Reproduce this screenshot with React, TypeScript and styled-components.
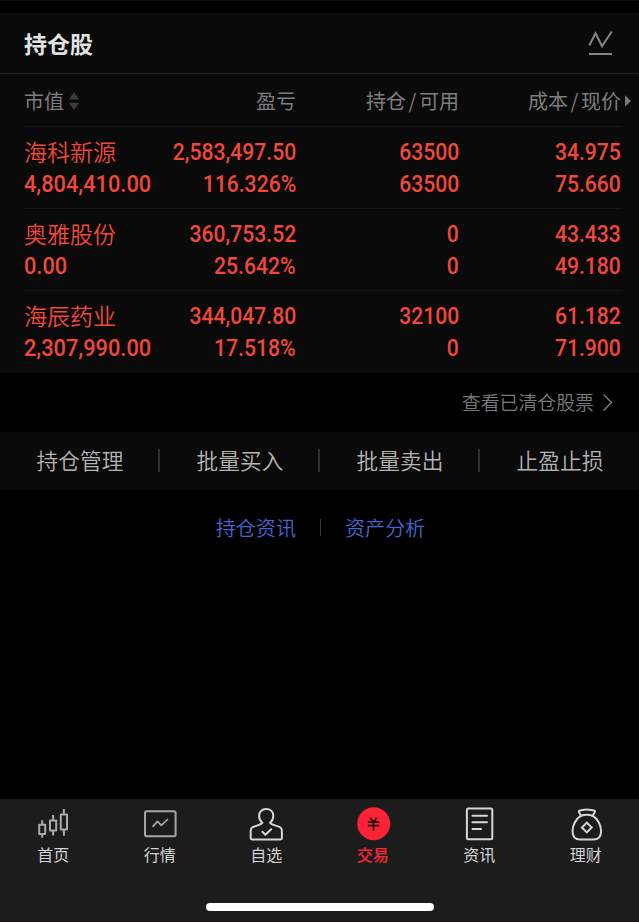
import React from "react";
import styled, { createGlobalStyle } from "styled-components";

const GlobalStyle = createGlobalStyle`
  * { box-sizing: border-box; }
  body {
    margin: 0;
    background: #000;
    font-family: "Noto Sans CJK SC", sans-serif;
    -webkit-font-smoothing: antialiased;
  }
`;

const Screen = styled.div`
  width: 639px;
  height: 922px;
  display: flex;
  flex-direction: column;
  background: #000;
  border-top: 1px solid #0b0b0b;
  overflow: hidden;
`;

const Panel = styled.section`
  margin-top: 12px;
  height: 360px;
  background: #0a0a0a;
`;

const PanelHeader = styled.header`
  height: 61px;
  padding: 0 26px 1px 24px;
  display: flex;
  align-items: center;
  justify-content: space-between;
  border-bottom: 1px solid #232323;
`;

const Title = styled.h1`
  margin: 0;
  font-size: 23px;
  font-weight: 700;
  line-height: 34px;
  color: #e2e2e2;
`;

const Columns = styled.div`
  display: grid;
  grid-template-columns: 133px 139px 163px 162px;
  margin-left: 24px;
  width: 598px;
`;

const HeadRow = styled(Columns)`
  height: 52px;
  align-items: center;
  font-size: 20px;
  line-height: 30px;
  color: #7e7e7e;
  padding-top: 1px;
`;

const HeadCell = styled.div<{ $start?: boolean }>`
  display: flex;
  align-items: center;
  justify-content: ${(p) => (p.$start ? "flex-start" : "flex-end")};
  white-space: nowrap;
`;

const Slash = styled.span`
  width: 13px;
  text-align: center;
`;

const SortIcon = styled.svg`
  margin-left: 4px;
`;

const MoreArrow = styled.svg`
  margin: 0 -10px 0 4px;
`;

const Row = styled(Columns)`
  height: 82px;
  padding-top: 9px;
  grid-auto-rows: 32px;
  border-top: 1px solid #151515;
  color: #f0483a;
`;

const StockName = styled.div`
  font-size: 23px;
  line-height: 31px;
  font-weight: 350;
`;

const Figure = styled.div<{ $start?: boolean }>`
  font-family: Roboto, sans-serif;
  font-size: 24px;
  font-weight: 500;
  line-height: 33px;
  white-space: nowrap;
  justify-self: ${(p) => (p.$start ? "start" : "end")};
  transform: scaleX(${(p) => (p.$start ? 0.907 : 0.88)});
  transform-origin: ${(p) => (p.$start ? "left" : "right")};
`;

const ClearedLink = styled.div`
  height: 59px;
  padding: 0 26px 2px 0;
  display: flex;
  align-items: center;
  justify-content: flex-end;
  gap: 8px;
  font-size: 18.9px;
  font-weight: 350;
  color: #7a7a7a;
`;

const ActionBar = styled.nav`
  height: 58px;
  display: grid;
  grid-template-columns: repeat(4, 160px);
  background: #0a0a0a;
`;

const Action = styled.div`
  display: flex;
  align-items: center;
  justify-content: center;
  position: relative;
  padding-bottom: 3px;
  font-size: 21.7px;
  font-weight: 350;
  color: #b4b4b4;

  &:not(:last-child)::after {
    content: "";
    position: absolute;
    right: 0;
    top: 17px;
    width: 2px;
    height: 23px;
    background: #303030;
  }
`;

const Links = styled.div`
  height: 75px;
  display: flex;
  align-items: center;
  justify-content: center;
  gap: 24px;
  padding-left: 2px;
  font-size: 20.1px;
  font-weight: 350;
  color: #4565cf;
`;

const LinkDivider = styled.span`
  width: 1px;
  height: 17px;
  background: #353535;
`;

const TabBar = styled.footer`
  margin-top: auto;
  height: 123px;
  padding-top: 7px;
  background: #1c1c1c;
  border-bottom: 1px solid #120a0c;
`;

const Tabs = styled.div`
  display: grid;
  grid-template-columns: repeat(6, 1fr);
  height: 97px;
`;

const Tab = styled.div<{ $active?: boolean }>`
  display: flex;
  flex-direction: column;
  align-items: center;
  font-size: 16px;
  line-height: 24px;
  font-weight: ${(p) => (p.$active ? 500 : 400)};
  color: ${(p) => (p.$active ? "#fd2336" : "#d2d2d2")};
`;

const TabIcon = styled.svg`
  display: block;
  width: 36px;
  height: 36px;
  fill: none;
  stroke-width: 2;
  stroke-linecap: round;
  stroke-linejoin: round;
`;

const HomeIndicator = styled.div`
  width: 228px;
  height: 8px;
  margin: 0 auto;
  border-radius: 4px;
  background: #fff;
`;

const holdings = [
  { name: "海科新源", value: "4,804,410.00", profit: "2,583,497.50", rate: "116.326%", held: "63500", usable: "63500", cost: "34.975", price: "75.660" },
  { name: "奥雅股份", value: "0.00", profit: "360,753.52", rate: "25.642%", held: "0", usable: "0", cost: "43.433", price: "49.180" },
  { name: "海辰药业", value: "2,307,990.00", profit: "344,047.80", rate: "17.518%", held: "32100", usable: "0", cost: "61.182", price: "71.900" },
];

const tabs = [
  {
    label: "首页",
    icon: (
      <g stroke="#ababab" strokeLinecap="butt" strokeLinejoin="round">
        <path d="M4.2 18.7h6v9.3h-6zM7.2 14.3v4.4M7.2 28v3.8" />
        <path d="M15 14.4h6.2v10H15zM18.1 9v5.4M18.1 24.4v5" />
        <path d="M25.8 8.6h6.2v14.8h-6.2zM28.9 3v5.6M28.9 23.4v6.4" />
      </g>
    ),
  },
  {
    label: "行情",
    icon: (
      <g stroke="#a6a6a6">
        <rect x="3" y="5.2" width="30.6" height="25" rx="1.6" />
        <path d="M11 20.4L15.6 15.4L19.3 19.3L25.5 13.5" strokeWidth="1.7" />
      </g>
    ),
  },
  {
    label: "自选",
    icon: (
      <g stroke="#d6d6d6">
        <path d="M14.3 16.8C12.1 15 11.1 12.6 11.1 10C11.1 6 13.8 3.1 18.2 3.1S25.3 6 25.3 10C25.3 12.6 24.3 15 22.1 16.8C23.8 18.9 28.5 19.7 32 21.2C33.3 21.8 33.9 23.2 33.9 25V32Q33.9 33.4 32.5 33.4H4.1Q2.7 33.4 2.7 32V25C2.7 23.2 3.3 21.8 4.6 21.2C8 19.7 12.6 18.9 14.3 16.8Z" />
        <path d="M14.4 25.8L17.4 28.8L23.2 23.2" />
      </g>
    ),
  },
  {
    label: "交易",
    icon: (
      <g stroke="#241315">
        <circle cx="18.7" cy="17.7" r="16.5" fill="#fd2336" stroke="none" />
        <path d="M15.1 11.8L18.5 15.8L21.9 11.8M12.7 16.2H24.3M12.7 19.7H24.3M18.5 16V25" strokeWidth="1.8" strokeLinecap="butt" />
      </g>
    ),
  },
  {
    label: "资讯",
    icon: (
      <g stroke="#d6d6d6">
        <rect x="5.9" y="2.4" width="25.4" height="30.8" rx="1.5" />
        <path d="M11.5 9.7H26M11.5 16.3H26M11.5 23H20" />
      </g>
    ),
  },
  {
    label: "理财",
    icon: (
      <g stroke="#d6d6d6">
        <path d="M13.1 9.7C7.7 12.8 4.5 19.6 4.5 25C4.5 31.2 7 33.6 12 33.6H25.6C30.8 33.6 33.1 31 33.1 25C33.1 19.6 29.9 12.8 24.5 9.7" />
        <path d="M13 9.7L11 6.2Q10.5 4.5 12.2 4.4C14.2 4.2 16 3.6 18.5 3.6S23.6 4.2 25.8 4.4Q27.5 4.6 26.8 6.2L24.6 9.7C21 8.5 16.8 8.5 13 9.7Z" />
        <path d="M18.8 16.6L23.7 21.5L18.8 26.4L13.9 21.5Z" strokeLinejoin="miter" />
      </g>
    ),
  },
];

export default function App() {
  return (
    <>
      <GlobalStyle />
      <Screen>
        <Panel>
          <PanelHeader>
            <Title>持仓股</Title>
            <svg width="25" height="26" viewBox="0 0 25 26" fill="none" stroke="#858585">
              <path d="M1.3 15.5L7.5 3.2L14 16.2L23.8 1.5" strokeWidth="2" />
              <path d="M1 24H24" strokeWidth="2" />
            </svg>
          </PanelHeader>
          <HeadRow>
            <HeadCell $start>
              市值
              <SortIcon width="12" height="20" viewBox="0 0 12 20" fill="#3b3b3b">
                <path d="M6 1L11.3 8.5H.7zM6 19L.7 11.8H11.3z" />
              </SortIcon>
            </HeadCell>
            <HeadCell>盈亏</HeadCell>
            <HeadCell>
              持仓<Slash>/</Slash>可用
            </HeadCell>
            <HeadCell>
              成本<Slash>/</Slash>现价
              <MoreArrow width="6" height="12" viewBox="0 0 6 12" fill="#777">
                <path d="M0 .2L6 6L0 11.8z" />
              </MoreArrow>
            </HeadCell>
          </HeadRow>
          {holdings.map((h) => (
            <Row key={h.name}>
              <StockName>{h.name}</StockName>
              <Figure>{h.profit}</Figure>
              <Figure>{h.held}</Figure>
              <Figure>{h.cost}</Figure>
              <Figure $start>{h.value}</Figure>
              <Figure>{h.rate}</Figure>
              <Figure>{h.usable}</Figure>
              <Figure>{h.price}</Figure>
            </Row>
          ))}
        </Panel>
        <ClearedLink>
          查看已清仓股票
          <svg width="11" height="18" viewBox="0 0 11 18" fill="none" stroke="#777" strokeWidth="1.5">
            <path d="M1.5 1.5L9.5 9.5L1.5 17.5" />
          </svg>
        </ClearedLink>
        <ActionBar>
          {["持仓管理", "批量买入", "批量卖出", "止盈止损"].map((label) => (
            <Action key={label}>{label}</Action>
          ))}
        </ActionBar>
        <Links>
          <span>持仓资讯</span>
          <LinkDivider />
          <span>资产分析</span>
        </Links>
        <TabBar>
          <Tabs>
            {tabs.map((t) => (
              <Tab key={t.label} $active={t.label === "交易"}>
                <TabIcon viewBox="0 0 36 36">{t.icon}</TabIcon>
                {t.label}
              </Tab>
            ))}
          </Tabs>
          <HomeIndicator />
        </TabBar>
      </Screen>
    </>
  );
}
